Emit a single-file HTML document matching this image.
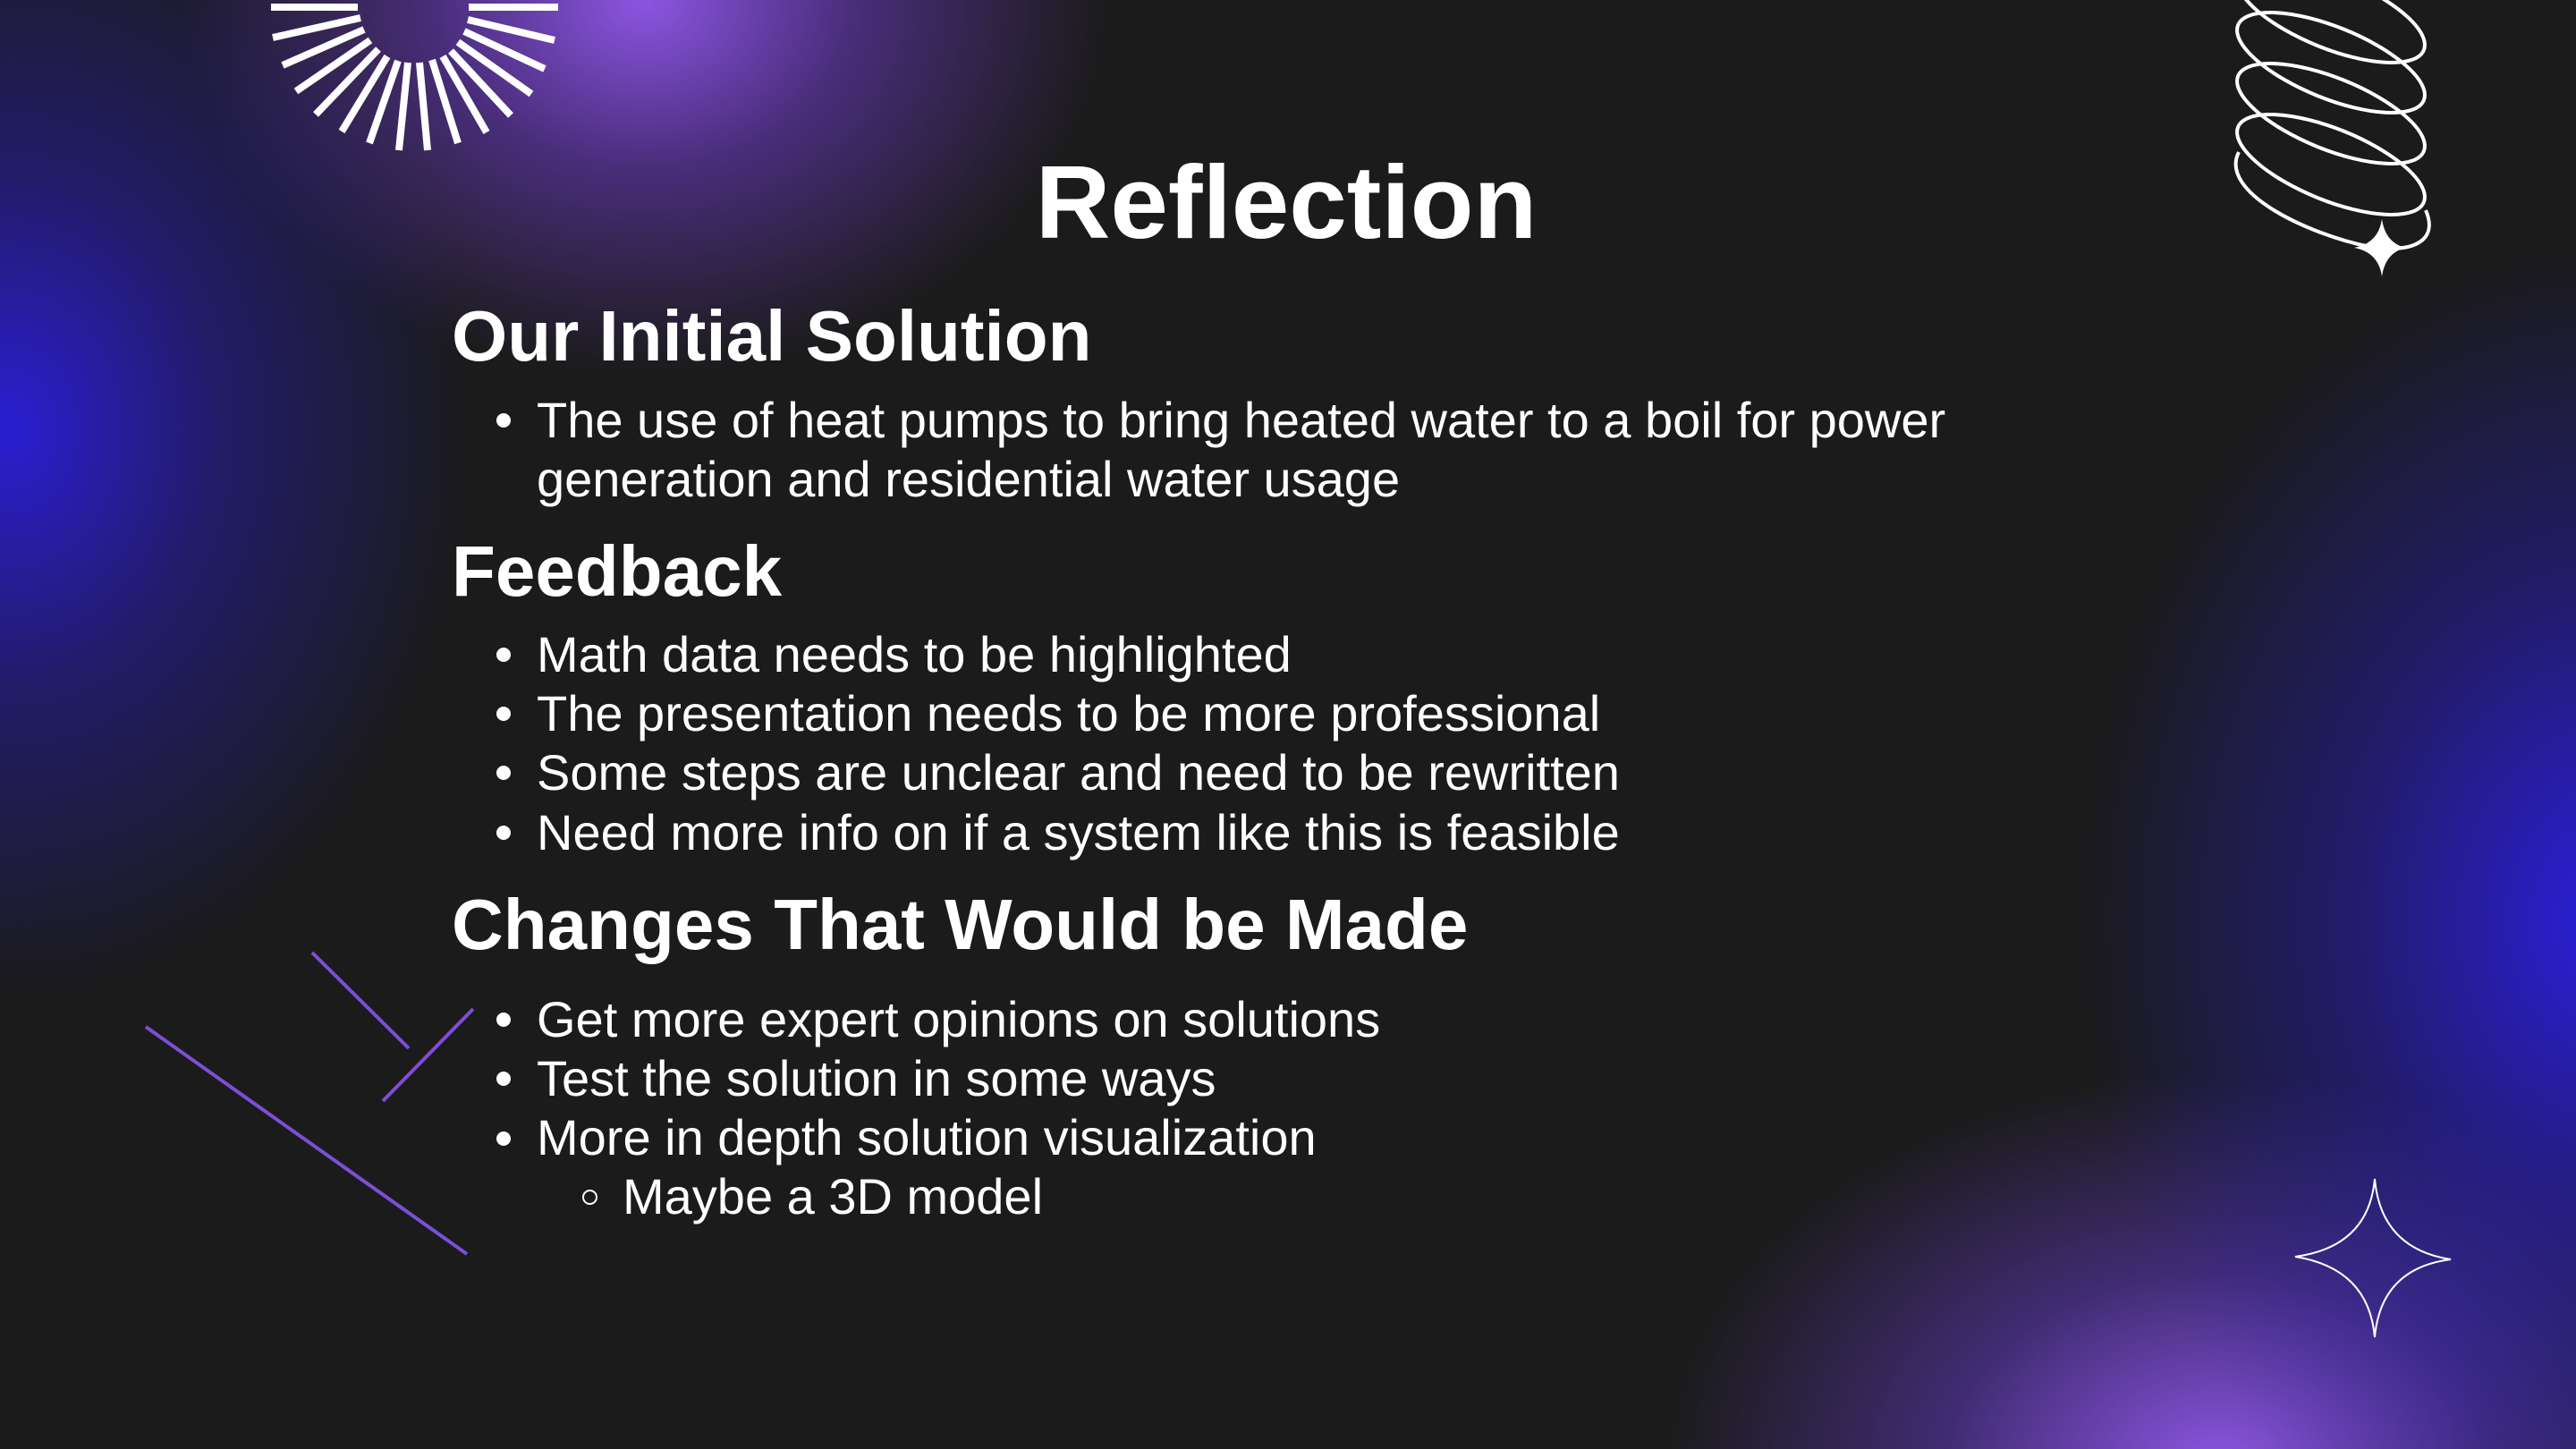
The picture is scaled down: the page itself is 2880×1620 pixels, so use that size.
<!DOCTYPE html>
<html><head><meta charset="utf-8"><style>
html,body{margin:0;padding:0}
body{width:2880px;height:1620px;overflow:hidden;position:relative;background:#1b1b1b;font-family:"Liberation Sans",sans-serif;color:#fff}
.bg{position:absolute;inset:0;background:
radial-gradient(ellipse 520px 640px at 10px 480px, rgba(44,30,220,0.95), rgba(44,30,220,0.4) 45%, rgba(44,30,220,0) 100%),
radial-gradient(ellipse 520px 420px at 720px 0px, rgba(140,85,225,1), rgba(110,60,200,0.55) 45%, rgba(80,40,160,0) 100%),
radial-gradient(ellipse 600px 760px at 2920px 1030px, rgba(44,30,220,1), rgba(40,30,200,0.45) 50%, rgba(40,30,200,0) 100%),
radial-gradient(ellipse 620px 440px at 2480px 1640px, rgba(140,85,225,1), rgba(100,60,200,0.5) 50%, rgba(80,40,160,0) 100%);}
.t{position:absolute;white-space:nowrap;line-height:1}
.h{font-weight:bold;font-size:80px;left:505px}
.b{font-size:56px;left:600px}
.dot{position:absolute;width:16px;height:16px;border-radius:50%;background:#fff}
</style></head><body>
<div class="bg"></div>
<svg width="2880" height="1620" style="position:absolute;left:0;top:0">
<g fill="none" stroke="#fff" stroke-width="4">
<ellipse cx="2606" cy="14" rx="112" ry="40" transform="rotate(22 2606 14)"/>
<ellipse cx="2606" cy="70" rx="112" ry="40" transform="rotate(22 2606 70)"/>
<ellipse cx="2606" cy="127" rx="112" ry="40" transform="rotate(22 2606 127)"/>
<ellipse cx="2606" cy="184" rx="112" ry="40" transform="rotate(22 2606 184)"/>
<path d="M2503 170 C2480 215 2580 262 2650 276 C2705 284 2725 265 2712 235"/>
</g>
<path d="M2663 245 Q2667 272 2690 277 Q2667 282 2663 309 Q2659 282 2632 277 Q2659 272 2663 245Z" fill="#fff"/>
<path d="M2655 1318 Q2662 1396 2740 1408 Q2662 1418 2655 1495 Q2648 1418 2566 1405 Q2648 1394 2655 1318Z" fill="none" stroke="#fff" stroke-width="2"/>
<g stroke="#7b4fd6" stroke-width="4">
<line x1="349" y1="1065" x2="457" y2="1172"/>
<line x1="428" y1="1231" x2="529" y2="1128"/>
<line x1="163" y1="1148" x2="522" y2="1402"/>
</g>
<g stroke="#fff" stroke-width="8">
<line x1="400" y1="8" x2="303" y2="8"/><line x1="524" y1="8" x2="624" y2="8"/>
<line x1="403" y1="20" x2="305" y2="42"/><line x1="523" y1="22" x2="620" y2="45"/>
<line x1="407" y1="33" x2="316" y2="73"/><line x1="519" y1="35" x2="609" y2="77"/>
<line x1="414" y1="45" x2="331" y2="102"/><line x1="512" y1="47" x2="594" y2="105"/>
<line x1="423" y1="55" x2="353" y2="128"/><line x1="504" y1="57" x2="571" y2="129"/>
<line x1="433" y1="63" x2="382" y2="147"/><line x1="495" y1="63" x2="544" y2="148"/>
<line x1="445" y1="68" x2="413" y2="160"/><line x1="483" y1="67" x2="512" y2="160"/>
<line x1="456" y1="70" x2="446" y2="168"/><line x1="469" y1="70" x2="478" y2="168"/>
</g>
</svg>
<div class="t" style="left:0;width:2876px;text-align:center;top:168px;font-size:116px;font-weight:bold">Reflection</div>
<div class="t h" style="top:336px">Our Initial Solution</div>
<div class="t h" style="top:599px">Feedback</div>
<div class="t h" style="top:994px">Changes That Would be Made</div>
<div class="t b" style="top:442px">The use of heat pumps to bring heated water to a boil for power</div>
<div class="t b" style="top:508px">generation and residential water usage</div>
<div class="t b" style="top:704px">Math data needs to be highlighted</div>
<div class="t b" style="top:770px">The presentation needs to be more professional</div>
<div class="t b" style="top:836px">Some steps are unclear and need to be rewritten</div>
<div class="t b" style="top:903px">Need more info on if a system like this is feasible</div>
<div class="t b" style="top:1112px">Get more expert opinions on solutions</div>
<div class="t b" style="top:1178px">Test the solution in some ways</div>
<div class="t b" style="top:1244px">More in depth solution visualization</div>
<div class="t b" style="top:1310px;left:696px">Maybe a 3D model</div>
<div class="dot" style="left:555px;top:462px"></div>
<div class="dot" style="left:555px;top:724px"></div>
<div class="dot" style="left:555px;top:790px"></div>
<div class="dot" style="left:555px;top:856px"></div>
<div class="dot" style="left:555px;top:923px"></div>
<div class="dot" style="left:555px;top:1132px"></div>
<div class="dot" style="left:555px;top:1198px"></div>
<div class="dot" style="left:555px;top:1265px"></div>
<div class="dot" style="left:651px;top:1330px;background:none;border:2px solid #fff;width:13px;height:13px"></div>
</body></html>
